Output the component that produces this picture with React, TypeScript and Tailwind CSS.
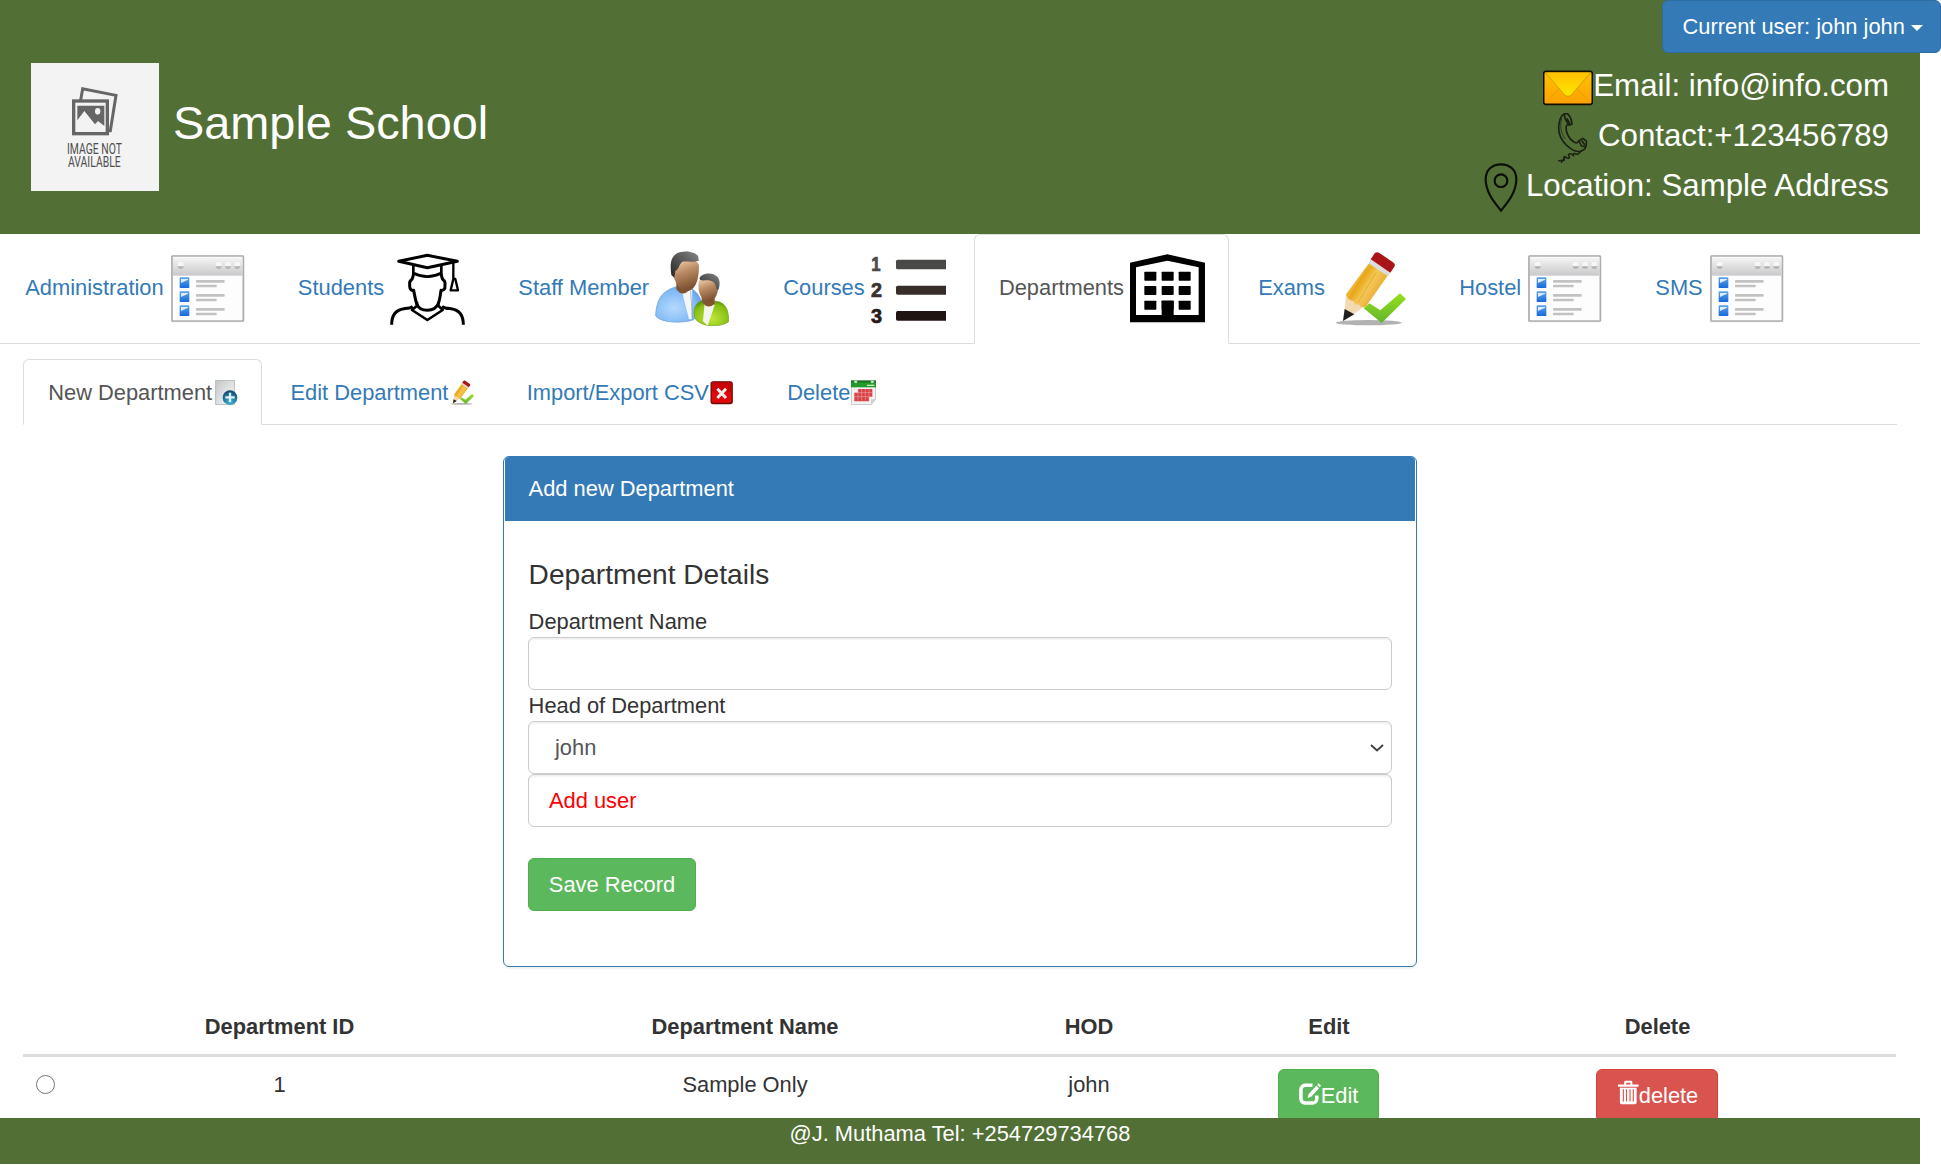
import React from "react";

type IconProps = { className?: string };

const WindowIcon = ({ className = "w-[75px]" }: IconProps) => (
  <svg viewBox="0 0 225 225" preserveAspectRatio="none" className={`h-[75px] shrink-0 ${className}`}>
    <defs>
      <linearGradient id="winbar" x1="0" y1="0" x2="0" y2="1">
        <stop offset="0" stopColor="#f4f4f4" />
        <stop offset="1" stopColor="#c9c9cb" />
      </linearGradient>
      <linearGradient id="winbox" x1="0" y1="0" x2="0" y2="1">
        <stop offset="0" stopColor="#5ea6e6" />
        <stop offset="1" stopColor="#1668e0" />
      </linearGradient>
    </defs>
    <rect x="3" y="12" width="220" height="202" rx="5" fill="#e0e0e0" />
    <rect x="6" y="15" width="214" height="195" rx="2" fill="#fdfdfd" stroke="#aeaeae" strokeWidth="5" />
    <rect x="9" y="20" width="208" height="54" fill="url(#winbar)" />
    {[32, 146, 174, 202].map((x) => (
      <g key={x}>
        <path d={`M${x - 9} 41a9 9 0 0 1 18 0v4h-18z`} fill="#f6f6f6" />
        <path d={`M${x - 9} 46h18a9 8 0 0 1 -18 0z`} fill="#b5b5b6" />
      </g>
    ))}
    {[79, 121, 163].map((y) => (
      <g key={y}>
        <rect x="29" y={y} width="29" height="32" rx="2" fill="url(#winbox)" />
        <path d={`M33 ${y + 5}h21v2l-21 10z`} fill="#dcecfb" />
        <rect x="78" y={y + 8} width="86" height="8" rx="2" fill="#c2c2c2" />
        <rect x="78" y={y + 22} width="62" height="8" rx="2" fill="#c2c2c2" />
      </g>
    ))}
  </svg>
);

const StudentIcon = () => (
  <svg viewBox="0 0 225 225" className="size-[75px] shrink-0" fill="none" stroke="#000" strokeWidth="9" strokeLinejoin="round">
    <path d="M26 31 L112 13 L202 31 L112 50 Z" />
    <path d="M70 42 V72 M154 42 V72 M70 66 Q112 88 154 66" strokeWidth="8" />
    <path d="M190 34 V84 M190 84 L182 118 H204 L196 84 Z" strokeWidth="7" />
    <path d="M71 68 C68 78 69 84 63 88 C56 92 60 100 59 106 C59 116 66 119 71 118 C74 134 76 146 80 158 C90 184 134 184 145 158 C149 146 151 134 153 118 C160 119 166 114 165 106 C164 100 168 92 161 88 C155 84 156 78 153 68" />
    <path d="M81 152 V164 L66 177 L112 207 L158 177 L145 164 V152" strokeWidth="8" />
    <path d="M5 221 C5 190 18 176 42 173 C56 172 62 172 68 166 M220 221 C220 190 206 176 183 173 C168 172 162 172 156 166" strokeWidth="9" />
  </svg>
);

const StaffIcon = () => (
  <svg viewBox="0 0 225 225" className="size-[75px] shrink-0">
    <defs>
      <linearGradient id="stskin" x1="0" y1="0" x2="0.3" y2="1">
        <stop offset="0.2" stopColor="#e2bb96" />
        <stop offset="0.5" stopColor="#b98a63" />
        <stop offset="1" stopColor="#7d5230" />
      </linearGradient>
      <linearGradient id="sthair" x1="0" y1="1" x2="1" y2="0">
        <stop offset="0" stopColor="#262626" />
        <stop offset="1" stopColor="#858585" />
      </linearGradient>
      <radialGradient id="stblue" cx="0.4" cy="0.6" r="0.7">
        <stop offset="0" stopColor="#b5dafc" />
        <stop offset="0.7" stopColor="#7fb9f6" />
        <stop offset="1" stopColor="#5a9be4" />
      </radialGradient>
      <radialGradient id="stgreen" cx="0.5" cy="0.7" r="0.7">
        <stop offset="0" stopColor="#bfe838" />
        <stop offset="0.8" stopColor="#84bd10" />
        <stop offset="1" stopColor="#5e960c" />
      </radialGradient>
    </defs>
    <path d="M63 107 C35 117 4 130 2 195 C20 219 92 216 116 206 L140 160 C138 134 122 124 108 109 Z" fill="url(#stblue)" stroke="#6d9fd8" strokeWidth="2" />
    <path d="M82 125 L102 205 L110 204 L112 117 L107 110 Z" fill="#f5f6f8" />
    <path d="M107 118 l5 84" stroke="#999" strokeWidth="2" />
    <path d="M64 88 V115 Q84 143 108 110 V95 Z" fill="#7c5434" />
    <path d="M54 48 C52 72 60 106 88 120 C116 125 132 96 132 45 C132 20 63 10 54 48Z" fill="url(#stskin)" />
    <path d="M49 72 C45 43 44 9 78 3 C94 -2 126 3 130 18 L131 29 C112 35 99 31 82 32 C72 40 72 54 61 60 L58 80 Z" fill="url(#sthair)" />
    <path d="M137 150 C117 160 113 184 121 204 C141 229 194 230 220 213 C223 180 213 156 185 151 Z" fill="url(#stgreen)" stroke="#6e9c28" strokeWidth="2" />
    <path d="M149 156 L144 210 L158 224 L179 162 Z" fill="#f3f4ef" />
    <path d="M140 138 V150 Q157 179 179 158 V142 Z" fill="#84542f" />
    <path d="M132 91 C125 117 138 150 158 154 C184 151 191 120 190 98 C180 75 140 76 132 91Z" fill="url(#stskin)" />
    <path d="M133 82 C140 67 171 61 188 78 C197 90 194 108 190 117 C183 119 185 102 176 94 C164 83 147 91 136 87 Z" fill="url(#sthair)" />
  </svg>
);

const CoursesIcon = () => (
  <svg viewBox="0 0 225 225" className="size-[75px] shrink-0" fontFamily="Liberation Sans, sans-serif" fontWeight="700" fontSize="58" strokeWidth="2">
    <text x="1" y="60" fill="#4a4a48" stroke="#4a4a48" textLength="28" lengthAdjust="spacingAndGlyphs">1</text>
    <text x="0" y="137" fill="#3a3230" stroke="#3a3230" textLength="33" lengthAdjust="spacingAndGlyphs">2</text>
    <text x="0" y="216" fill="#251c1a" stroke="#251c1a" textLength="33" lengthAdjust="spacingAndGlyphs">3</text>
    <path d="M80 26h145v29H80q-5 0-5-5V31q0-5 5-5z" fill="#494947" />
    <path d="M80 104h145v27H80q-5 0-5-5v-17q0-5 5-5z" fill="#372d2b" />
    <path d="M80 180h145v29H80q-5 0-5-5v-19q0-5 5-5z" fill="#201412" />
  </svg>
);

const BuildingIcon = () => (
  <svg viewBox="0 0 225 225" className="size-[75px] shrink-0">
    <path d="M0 35 L112 10 L225 35 V214 H0 Z" />
    <path d="M18 49 L112 29 L206 49 V192 H18 Z" fill="#fff" />
    {[62, 105, 149].map((y) => [43, 95, 146].map((x) => <rect key={`${x}-${y}`} x={x} y={y} width="36" height="27" rx="2" />))}
    <rect x="95" y="149" width="36" height="50" />
  </svg>
);

const PencilIcon = ({ className = "size-[75px]" }: IconProps) => (
  <svg viewBox="0 0 225 225" className={`shrink-0 ${className}`}>
    <defs>
      <linearGradient id="pcbody" x1="0" y1="0" x2="1" y2="0.7">
        <stop offset="0.2" stopColor="#f9cd5c" />
        <stop offset="0.45" stopColor="#e9a91a" />
        <stop offset="0.6" stopColor="#f5c85a" />
        <stop offset="1" stopColor="#dd9a14" />
      </linearGradient>
      <linearGradient id="pccheck" x1="0" y1="0" x2="0" y2="1">
        <stop offset="0" stopColor="#98e01c" />
        <stop offset="1" stopColor="#62b52e" />
      </linearGradient>
    </defs>
    <ellipse cx="113" cy="215" rx="99" ry="8" fill="#b2b2b2" />
    <path d="M45 130 L98 168 L60 194 L37 208 L41 175 Z" fill="#f2d9b2" />
    <path d="M41 174 L70 190 L36 210 Z" fill="#202020" />
    <path d="M119 30 L173 70 L106 165 Q94 174 84 161 Q72 164 68 150 Q51 150 45 130 Z" fill="url(#pcbody)" />
    <path d="M108 54 L56 138 M136 64 L80 156" stroke="#dfa01c" strokeWidth="3" opacity=".7" />
    <path d="M119 25 L177 65 L171 76 L112 37 Z" fill="#dcdcdc" />
    <path d="M131 7 Q136 2 144 5 L188 35 Q194 41 190 47 L178 65 L119 25 Z" fill="#a81418" />
    <path d="M98 172 L115 157 L148 178 L207 127 L225 144 L152 216 Z" fill="url(#pccheck)" />
  </svg>
);

const NewIcon = () => (
  <svg viewBox="0 0 75 75" className="size-[25px] shrink-0">
    <defs>
      <linearGradient id="newpg" x1="0" y1="0" x2="1" y2="1">
        <stop offset="0" stopColor="#c3c7c9" />
        <stop offset="1" stopColor="#fafafa" />
      </linearGradient>
      <radialGradient id="newball" cx="0.5" cy="0.8" r="0.8">
        <stop offset="0" stopColor="#42b5d8" />
        <stop offset="1" stopColor="#0a456d" />
      </radialGradient>
    </defs>
    <path d="M8 1h56v73H8z" fill="url(#newpg)" stroke="#aaaeb0" strokeWidth="2.5" />
    <circle cx="51" cy="53" r="22" fill="url(#newball)" />
    <path d="M51 38v28M37 52h28" stroke="#dff3fa" strokeWidth="7" />
  </svg>
);

const CrossIcon = () => (
  <svg viewBox="0 0 75 75" className="size-[25px] shrink-0">
    <rect x="6.500" y="5.500" width="63" height="65" rx="6" fill="#e00808" stroke="#6e0a0a" strokeWidth="4" />
    <path d="M10 8h56v27H10z" fill="#b40000" opacity=".5" />
    <path d="M25 26L51 54M51 26L25 54" stroke="#f8eeec" strokeWidth="9" />
  </svg>
);

const CalendarIcon = () => (
  <svg viewBox="0 0 75 75" className="size-[25px] shrink-0">
    <path d="M1 2h73v56L60 74H1z" fill="#f3f3f3" stroke="#b9bcb8" strokeWidth="2.500" />
    <path d="M0 2h75v20H0z" fill="#239a2b" />
    <path d="M0 2h75v5H0z" fill="#176f24" />
    <path d="M8 2h12l-3 7h-6zM58 2h12l-3 7h-6z" fill="#c9dcc9" />
    <path d="M48 16h22" stroke="#c5efb8" strokeWidth="4" />
    <path d="M21 27h43v24H54v13H10V38h11z" fill="#d93f44" />
    <path d="M10 38h54M10 50h54M21 27v35M32 27v35M43 27v35M54 27v35" stroke="#eda6a6" strokeWidth="1.800" />
    <path d="M60 74V58h14z" fill="#d0d0d0" />
  </svg>
);

const MailIcon = () => (
  <svg viewBox="0 0 150 150" className="size-[50px] shrink-0">
    <defs>
      <linearGradient id="mailbg" x1="0" y1="0" x2="0" y2="1">
        <stop offset="0" stopColor="#ffc400" />
        <stop offset="1" stopColor="#ff9f00" />
      </linearGradient>
      <linearGradient id="mailflap" x1="0" y1="0" x2="0" y2="1">
        <stop offset="0" stopColor="#ffc000" />
        <stop offset="1" stopColor="#ffe600" />
      </linearGradient>
    </defs>
    <rect x="2" y="25" width="146" height="99" rx="7" fill="url(#mailbg)" stroke="#120f02" strokeWidth="5" />
    <path d="M10 115 L52 75 M140 115 L98 75" stroke="#e09600" strokeWidth="2" />
    <path d="M7 29 H143 L87 94 Q75 106 63 94 Z" fill="url(#mailflap)" />
    <path d="M7 29 L63 94 Q75 106 87 94 L143 29" fill="none" stroke="#c89200" strokeWidth="2.500" />
  </svg>
);

const PhoneIcon = () => (
  <svg viewBox="0 0 150 150" className="mr-px size-[50px] shrink-0" fill="none" stroke="#1b2114" strokeWidth="5" strokeLinecap="round" strokeLinejoin="round">
    <path d="M54 2 C35 8 31 48 40 70 C52 98 85 122 103 114 C116 110 119 96 118 84 L107 76 L95 84 C90 98 70 82 63 67 C57 54 55 42 60 36 L75 34 Q74 12 60 1 Z" />
    <path d="M54 2 Q50 8 56 20 Q62 34 68 36 M60 18 L68 30 M95 84 Q100 90 103 99 L116 101 M105 84 L112 94" />
    <path d="M44 18 C37 36 42 62 54 77" strokeWidth="2" />
    <path d="M103 114 C97 118 96 127 87 123 C80 119 78 122 80 128 C76 126 72 119 66 124 C60 123 72 135 65 136 C58 137 52 126 51 132 C52 139 54 144 47 142 L35 143 M53 133 L43 148" strokeWidth="4.500" />
  </svg>
);

const PinIcon = () => (
  <svg viewBox="0 0 150 150" className="mr-px size-[50px] shrink-0" fill="none" stroke="#0b0f07" strokeWidth="6.500">
    <path d="M78 143 C65 125 32 92 32 49 C32 18 54 4 78 4 C102 4 124 18 124 49 C124 92 91 125 78 143Z" />
    <circle cx="78" cy="53" r="19" />
  </svg>
);

const NoImage = () => (
  <svg viewBox="0 0 384 384" className="size-[128px] shrink-0" fontFamily="Roboto, sans-serif" fontSize="42" fill="#4e4e4e">
    <rect width="384" height="384" fill="#f3f3f3" />
    <path d="M149 112 L155 77 L255 97 L238 203 H226" fill="none" stroke="#666" strokeWidth="9" />
    <rect x="128" y="114" width="101" height="98" fill="#f3f3f3" stroke="#666" strokeWidth="10" />
    <path d="M139 128H220V189L201 174L192 184L160 144L139 172Z" fill="#666" />
    <ellipse cx="200" cy="145" rx="8" ry="10" fill="#f3f3f3" />
    <text x="108" y="273" textLength="165" lengthAdjust="spacingAndGlyphs">IMAGE NOT</text>
    <text x="111" y="312" textLength="158" lengthAdjust="spacingAndGlyphs">AVAILABLE</text>
  </svg>
);

const EditGlyph = () => (
  <svg viewBox="0 0 22 22" className="mb-[3px] size-[22px] shrink-0" fill="none">
    <path d="M13.500 2.300H6A4.300 4.300 0 0 0 1.900 6.600V15.700A4.300 4.300 0 0 0 6 20H13.500A4.300 4.300 0 0 0 17.800 15.700V12.500" stroke="#fff" strokeWidth="3.500" />
    <path d="M8.500 15L9.700 11L17.300 2.800L20 5.300L12.500 13.500Z" fill="#fff" />
    <path d="M18.200 1.900L19.600 .3L22 2.600L20.800 4.200Z" fill="#fff" />
  </svg>
);

const TrashGlyph = () => (
  <svg viewBox="0 0 22 25" className="mb-1.5 ml-px h-[25px] w-[21px] shrink-0" fill="#fff">
    <path fillRule="evenodd" d="M6.500 4.200V1.500Q6.500 .2 7.800 .2H13.700Q15 .2 15 1.500V4.200H21.500V6.500H0V4.200ZM8.500 4.200H13V2.300H8.500Z" />
    <path fillRule="evenodd" d="M2 7.500H19.500V23Q19.500 24.800 17.700 24.800H3.800Q2 24.800 2 23ZM5 9V22H6.200V9ZM8.300 9V22H9.500V9ZM12 9V22H13.200V9ZM15.400 9V22H16.600V9Z" />
  </svg>
);

const mainTabs = [
  { label: "Administration", icon: <WindowIcon /> },
  { label: "Students", icon: <StudentIcon /> },
  { label: "Staff Member", icon: <StaffIcon /> },
  { label: "Courses", icon: <CoursesIcon /> },
  { label: "Departments", icon: <BuildingIcon />, active: true },
  { label: "Exams", icon: <PencilIcon /> },
  { label: "Hostel", icon: <WindowIcon /> },
  { label: "SMS", icon: <WindowIcon /> },
];

const subTabs = [
  { label: "New Department", icon: <NewIcon />, active: true },
  { label: "Edit Department", icon: <PencilIcon className="size-[25px]" /> },
  { label: "Import/Export CSV", icon: <CrossIcon /> },
  { label: "Delete", icon: <CalendarIcon /> },
];

const tabBase = "flex items-center rounded-t-[6px] border pl-[24.2px] pr-[23.4px] -mb-px ";
const tabActive = "border-[#ddd] border-b-white bg-white text-[#555]";
const tabIdle = "border-transparent text-[#337ab7]";
const field = "block h-[53px] w-full rounded-[6px] border border-[#ccc] bg-white shadow-[inset_0_1.5px_1.5px_rgba(0,0,0,0.075)]";
const tableCols = "grid grid-cols-[37px_439px_492px_196px_284px_373px]";

export default function App() {
  return (
    <div className="relative h-[1165px] w-full overflow-hidden bg-white font-['Liberation_Sans',Arial,sans-serif] text-[21.875px] leading-[31.25px] text-[#333]">
      <div className="w-[1920px]">
        <header className="flex h-[234px] items-start justify-between bg-[#527035] pl-[31px] pr-[31px] pt-[63px] text-white">
          <div className="flex items-center">
            <NoImage />
            <h1 className="pb-2 pl-[14px] text-[46.875px] leading-[52px]">Sample School</h1>
          </div>
          <div className="flex flex-col items-end text-[31.25px]">
            <div className="flex h-[50px] items-center"><MailIcon /><span className="pb-[5px]">Email: info@info.com</span></div>
            <div className="flex h-[50px] items-center"><PhoneIcon /><span className="pb-[5px]">Contact:+123456789</span></div>
            <div className="flex h-[50px] items-center"><PinIcon /><span className="pb-[5px]">Location: Sample Address</span></div>
          </div>
        </header>

        <nav className="flex h-[110px] gap-[3.6px] border-b border-[#ddd]">
          {mainTabs.map((t) => (
            <a key={t.label} className={`h-[110px] gap-[6px] pb-[2px] ${tabBase}${t.active ? tabActive : tabIdle}`}>
              <span>{t.label}</span>
              {t.icon}
            </a>
          ))}
        </nav>

        <main className="px-[23px] pt-[15px]">
          <nav className="flex h-[66px] gap-[3.2px] border-b border-[#ddd]">
            {subTabs.map((t) => (
              <a key={t.label} className={`h-[66px] gap-[0.5px] pt-px ${tabBase}${t.active ? tabActive : tabIdle}`}>
                <span>{t.label}</span>
                {t.icon}
              </a>
            ))}
          </nav>

          <section className="mx-auto mt-[31px] h-[511px] w-[914px] rounded-[6px] border border-[#337ab7] bg-white shadow-[0_1.5px_1.5px_rgba(0,0,0,0.05)]">
            <div className="mx-px h-[64px] rounded-t-[4px] bg-[#337ab7] px-[23.6px] pt-4 text-white">Add new Department</div>
            <div className="px-6 pt-[38px]">
              <h2 className="pl-[0.6px] text-[28.125px] leading-[31px]">Department Details</h2>
              <label className="mt-[16px] block h-[31px] pl-[0.6px]">Department Name</label>
              <input className={field} />
              <label className="block h-[31px] pl-[0.6px]">Head of Department</label>
              <div className={`${field} flex items-center justify-between pl-[26px] pr-[7px] text-[#555]`}>
                <span>john</span>
                <svg viewBox="0 0 14 8" className="h-2 w-3.5" fill="none" stroke="#444" strokeWidth="2">
                  <path d="M1 1L7 6.500L13 1" />
                </svg>
              </div>
              <div className={`${field} flex items-center px-5 text-[#f00]`}>Add user</div>
              <button className="mt-[31px] flex h-[53px] w-[168px] items-center justify-center rounded-[6px] border border-[#4cae4c] bg-[#5cb85c] text-white">Save Record</button>
            </div>
          </section>

          <div className="mt-[31px] w-[1873px]">
            <div className={`${tableCols} h-[59px] border-b-[3px] border-[#ddd] pt-[13px] text-center font-bold`}>
              <span />
              <span>Department ID</span>
              <span>Department Name</span>
              <span>HOD</span>
              <span>Edit</span>
              <span>Delete</span>
            </div>
            <div className={`${tableCols} pt-3 text-center`}>
              <span className="ml-[13px] mt-[6px] size-[19px] rounded-full border-[1.5px] border-[#767676]" />
              <span>1</span>
              <span>Sample Only</span>
              <span>john</span>
              <span className="flex justify-center pr-[2px]">
                <button className="flex h-[53px] w-[101px] items-center justify-center rounded-[6px] border border-[#4cae4c] bg-[#5cb85c] pl-px text-white"><EditGlyph />Edit</button>
              </span>
              <span className="flex justify-center pr-[2px]">
                <button className="flex h-[53px] w-[122px] items-center justify-center rounded-[6px] border border-[#d43f3a] bg-[#d9534f] pl-[2px] text-white"><TrashGlyph />delete</button>
              </span>
            </div>
          </div>
        </main>
      </div>

      <button className="absolute right-0 top-0 flex h-[53px] w-[279px] items-center rounded-[6px] border border-[#2e6da4] bg-[#337ab7] pl-[19.500px] text-white">
        Current user: john john
        <span className="ml-[6px] mt-0.5 border-x-[6px] border-t-[6px] border-x-transparent border-t-white" />
      </button>

      <footer className="absolute left-0 top-[1118px] h-[46px] w-[1920px] bg-[#527035] text-center text-white">@J. Muthama Tel: +254729734768</footer>
    </div>
  );
}
